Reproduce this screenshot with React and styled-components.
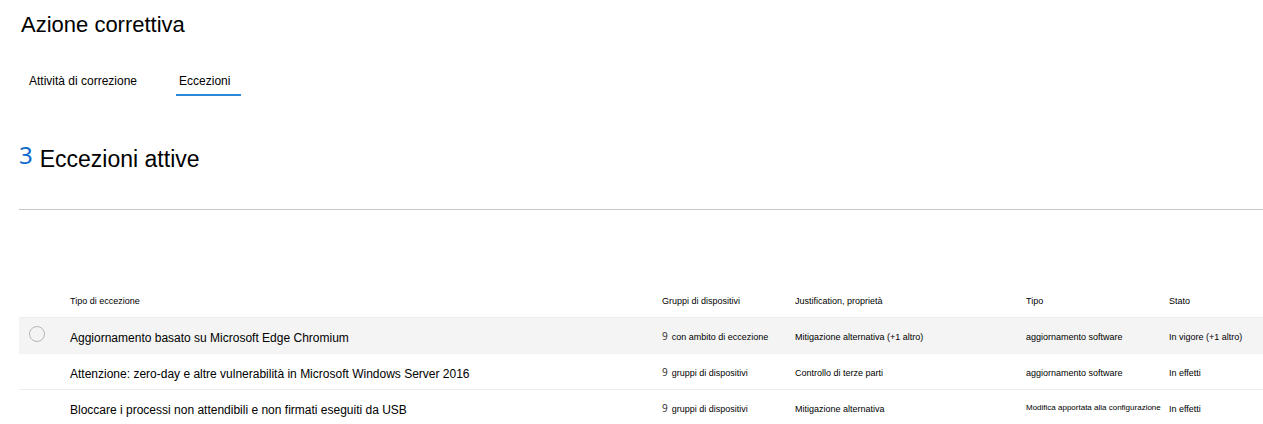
import React from "react";
import styled, { createGlobalStyle } from "styled-components";

const Global = createGlobalStyle`
  * { box-sizing: border-box; }
  body { margin: 0; background: #fff; color: #000; font-family: "Liberation Sans", Arial, sans-serif; }
`;
const Page = styled.main`padding: 9px 0 0 19px;`;
const Title = styled.h1`margin: 0 0 0 2px; font-size: 22px; line-height: 32px; font-weight: 400;`;
const Tabs = styled.nav`display: flex; gap: 36px; margin: 27px 0 0 7px;`;
const Tab = styled.a`
  padding: 0 3px; font-size: 12px; line-height: 26px; color: #000; text-decoration: none;
  border-bottom: 2px solid ${(p) => (p.$active ? "#2b88d8" : "transparent")};
  ${(p) => p.$active && "padding-right: 11px;"}
`;
const Summary = styled.h2`
  display: flex; align-items: flex-start; gap: 7px; margin: 0; padding: 45px 0 32px 0;
  font-size: 23px; line-height: 36px; font-weight: 400; border-bottom: 1px solid #c8c8c8;
`;
const Count = styled.span`
  color: #0f6cce; font-family: "Noto Sans", sans-serif; font-size: 24px; line-height: 28px;
`;
const Table = styled.table`
  width: 100%; margin-top: 75px; border-collapse: collapse; table-layout: fixed; text-align: left;
`;
const Col = styled.col`width: ${(p) => p.$w};`;
const Head = styled.th`padding: 0; height: 32px; font-size: 9px; font-weight: 400;`;
const Row = styled.tr`
  height: 36px; border-top: 1px solid #ececec; background: ${(p) => (p.$selected ? "#f4f4f4" : "#fff")};
  ${(p) => p.$selected && "& + tr { border-top-color: #f4f4f4; }"}
`;
const Cell = styled.td`padding: 3px 0 0; font-size: 9px; white-space: nowrap;`;
const Pick = styled(Cell)`padding: 0;`;
const Name = styled(Cell)`font-size: 12px; padding-top: 6px;`;
const Note = styled(Cell)`font-size: 8px; padding-top: 0;`;
const Groups = styled.div`display: flex; align-items: center; gap: 4px; line-height: 12px;`;
const Num = styled.span`
  color: #333; font-family: "Noto Sans", sans-serif; font-size: 10px; line-height: 10px; padding-bottom: 2px;
`;
const Radio = styled.input`
  appearance: none; display: block; width: 16px; height: 16px; margin: 0 0 2px 10px;
  border: 1px solid #b5b5b5; border-radius: 50%;
`;

const rows = [
  ["Aggiornamento basato su Microsoft Edge Chromium", "con ambito di eccezione", "Mitigazione alternativa (+1 altro)", "aggiornamento software", "In vigore (+1 altro)"],
  ["Attenzione: zero-day e altre vulnerabilità in Microsoft Windows Server 2016", "gruppi di dispositivi", "Controllo di terze parti", "aggiornamento software", "In effetti"],
  ["Bloccare i processi non attendibili e non firmati eseguiti da USB", "gruppi di dispositivi", "Mitigazione alternativa", "Modifica apportata alla configurazione", "In effetti"],
];

export default function App() {
  return (
    <Page>
      <Global />
      <Title>Azione correttiva</Title>
      <Tabs>
        <Tab href="#attivita">Attività di correzione</Tab>
        <Tab href="#eccezioni" $active aria-current="page">Eccezioni</Tab>
      </Tabs>
      <Summary><Count>3</Count>Eccezioni attive</Summary>
      <Table>
        <colgroup>
          <Col $w="51px" /><Col /><Col $w="133px" /><Col $w="231px" /><Col $w="143px" /><Col $w="94px" />
        </colgroup>
        <thead>
          <tr>
            <Head aria-label="Selezione" />
            <Head>Tipo di eccezione</Head><Head>Gruppi di dispositivi</Head>
            <Head>Justification, proprietà</Head><Head>Tipo</Head><Head>Stato</Head>
          </tr>
        </thead>
        <tbody>
          {rows.map(([name, groups, reason, type, state], i) => {
            const TypeCell = type.length > 30 ? Note : Cell;
            return (
              <Row key={name} $selected={i === 0}>
                <Pick>{i === 0 && <Radio type="radio" name="eccezione" aria-label={name} />}</Pick>
                <Name>{name}</Name>
                <Cell><Groups><Num>9</Num>{groups}</Groups></Cell>
                <Cell>{reason}</Cell>
                <TypeCell>{type}</TypeCell>
                <Cell>{state}</Cell>
              </Row>
            );
          })}
        </tbody>
      </Table>
    </Page>
  );
}
